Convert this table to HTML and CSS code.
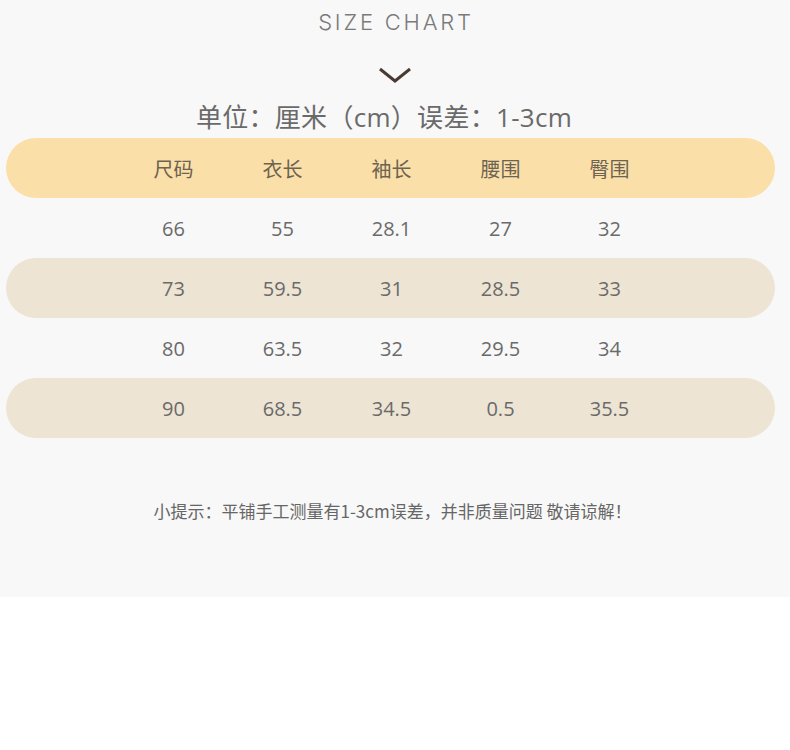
FILE: index.html
```html
<!DOCTYPE html>
<html lang="zh">
<head>
<meta charset="utf-8">
<link rel="stylesheet" href="styles.css">
</head>
<body>
<div class="panel">
  <div class="title">SIZE CHART</div>
  <div class="chev">
    <svg width="34" height="17" viewBox="0 0 34 17"><polyline points="2,2 17,14 32,2" fill="none" stroke="#4a3b32" stroke-width="3"/></svg>
  </div>
  <div class="unit">单位：厘米（cm）误差：1-3cm</div>
  <div class="table">
    <div class="row head"><span>尺码</span><span>衣长</span><span>袖长</span><span>腰围</span><span>臀围</span></div>
    <div class="row"><span>66</span><span>55</span><span>28.1</span><span>27</span><span>32</span></div>
    <div class="row alt"><span>73</span><span>59.5</span><span>31</span><span>28.5</span><span>33</span></div>
    <div class="row"><span>80</span><span>63.5</span><span>32</span><span>29.5</span><span>34</span></div>
    <div class="row alt"><span>90</span><span>68.5</span><span>34.5</span><span>0.5</span><span>35.5</span></div>
  </div>
  <div class="note">小提示：平铺手工测量有1-3cm误差，并非质量问题 敬请谅解！</div>
</div>
</body>
</html>
```
FILE: styles.css
```css
html, body { margin: 0; padding: 0; background: #ffffff; }
body { font-family: "Open Sans", "Noto Sans CJK SC", sans-serif; color: #666; }
.panel { background: #f8f8f8; height: 597px; padding-top: 8px; box-sizing: border-box; }
.title { text-align: center; font-family: "Inter", "Noto Sans", sans-serif; font-weight: 300; font-size: 22px; letter-spacing: 2.8px; color: #7a7a7a; line-height: 28px; padding-left: 2px; }
.chev { display: flex; justify-content: center; margin-top: 31px; height: 17px; }
.chev svg { display: block; }
.unit { text-align: center; font-size: 26px; letter-spacing: 0.3px; line-height: 36px; margin-top: 15px; color: #6a6a6a; margin-right: 22px; }
.table { margin: 3px 15px 0 6px; display: flex; flex-direction: column; }
.row { height: 60px; border-radius: 30px; display: grid; grid-template-columns: 113px 109px 109px 109px 109px 109px; align-items: center; font-size: 20px; color: #6a6a6a; }
.row span { text-align: center; }
.row span:first-child { grid-column: 2; }
.head { background: #fae0a8; font-family: "Noto Sans CJK SC", sans-serif; font-size: 20px; color: #6e6252; }
.alt { background: #ede4d3; }
.note { text-align: center; font-size: 17px; font-family: "Noto Sans CJK SC", sans-serif; margin-top: 60px; color: #666; margin-right: 5px; }
```
